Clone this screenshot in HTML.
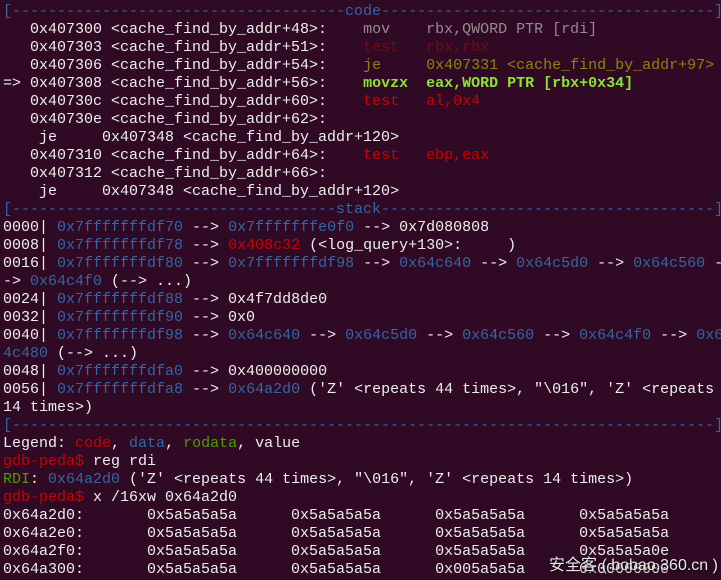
<!DOCTYPE html>
<html><head><meta charset="utf-8"><style>
html,body{margin:0;padding:0;background:#300a24;width:721px;height:580px;overflow:hidden}
pre{margin:0;position:absolute;left:3px;top:3px;font-family:"Liberation Mono",monospace;font-size:15px;line-height:18px;color:#eeeeec;white-space:pre}
.b{color:#3465a4}.r{color:#cc0000}.g{color:#4e9a06}.G{color:#8ae234;font-weight:bold}
.dg{color:#948a90}.dr{color:#740a14}.dy{color:#8a840c}
.wm{position:absolute;left:549px;top:551px;font-family:"Liberation Sans","Noto Sans CJK SC",sans-serif;font-size:16px;color:#e8e8e8;text-shadow:1px 1px 2px #000}
</style></head><body>
<pre><span class="b">[-------------------------------------code-------------------------------------]</span>
   0x407300 &lt;cache_find_by_addr+48&gt;:	<span class="dg">mov    rbx,QWORD PTR [rdi]</span>
   0x407303 &lt;cache_find_by_addr+51&gt;:	<span class="dr">test   rbx,rbx</span>
   0x407306 &lt;cache_find_by_addr+54&gt;:	<span class="dy">je     0x407331 &lt;cache_find_by_addr+97&gt;</span>
=&gt; 0x407308 &lt;cache_find_by_addr+56&gt;:	<span class="G">movzx  eax,WORD PTR [rbx+0x34]</span>
   0x40730c &lt;cache_find_by_addr+60&gt;:	<span class="r">test   al,0x4</span>
   0x40730e &lt;cache_find_by_addr+62&gt;:	
    je     0x407348 &lt;cache_find_by_addr+120&gt;
   0x407310 &lt;cache_find_by_addr+64&gt;:	<span class="r">test   ebp,eax</span>
   0x407312 &lt;cache_find_by_addr+66&gt;:	
    je     0x407348 &lt;cache_find_by_addr+120&gt;
<span class="b">[------------------------------------stack-------------------------------------]</span>
0000| <span class="b">0x7fffffffdf70</span> --&gt; <span class="b">0x7fffffffe0f0</span> --&gt; 0x7d080808 
0008| <span class="b">0x7fffffffdf78</span> --&gt; <span class="r">0x408c32</span> (&lt;log_query+130&gt;:	)
0016| <span class="b">0x7fffffffdf80</span> --&gt; <span class="b">0x7fffffffdf98</span> --&gt; <span class="b">0x64c640</span> --&gt; <span class="b">0x64c5d0</span> --&gt; <span class="b">0x64c560</span> -
-&gt; <span class="b">0x64c4f0</span> (--&gt; ...)
0024| <span class="b">0x7fffffffdf88</span> --&gt; 0x4f7dd8de0 
0032| <span class="b">0x7fffffffdf90</span> --&gt; 0x0 
0040| <span class="b">0x7fffffffdf98</span> --&gt; <span class="b">0x64c640</span> --&gt; <span class="b">0x64c5d0</span> --&gt; <span class="b">0x64c560</span> --&gt; <span class="b">0x64c4f0</span> --&gt; <span class="b">0x6</span>
<span class="b">4c480</span> (--&gt; ...)
0048| <span class="b">0x7fffffffdfa0</span> --&gt; 0x400000000 
0056| <span class="b">0x7fffffffdfa8</span> --&gt; <span class="b">0x64a2d0</span> ('Z' &lt;repeats 44 times&gt;, "\016", 'Z' &lt;repeats
14 times&gt;)
<span class="b">[------------------------------------------------------------------------------]</span>
Legend: <span class="r">code</span>, <span class="b">data</span>, <span class="g">rodata</span>, value
<span class="r">gdb-peda$ </span>reg rdi
<span class="g">RDI</span>: <span class="b">0x64a2d0</span> ('Z' &lt;repeats 44 times&gt;, "\016", 'Z' &lt;repeats 14 times&gt;)
<span class="r">gdb-peda$ </span>x /16xw 0x64a2d0
0x64a2d0:	0x5a5a5a5a	0x5a5a5a5a	0x5a5a5a5a	0x5a5a5a5a
0x64a2e0:	0x5a5a5a5a	0x5a5a5a5a	0x5a5a5a5a	0x5a5a5a5a
0x64a2f0:	0x5a5a5a5a	0x5a5a5a5a	0x5a5a5a5a	0x5a5a5a0e
0x64a300:	0x5a5a5a5a	0x5a5a5a5a	0x005a5a5a	0x00000000
</pre>
<div class="wm">安全客 ( bobao.360.cn )</div>
</body></html>
